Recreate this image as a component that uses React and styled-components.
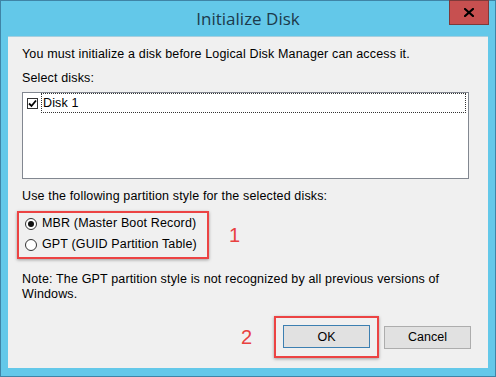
import styled, { createGlobalStyle } from "styled-components";

const GlobalStyle = createGlobalStyle`
    html, body {
        margin: 0;
        padding: 0;
        background: #ffffff;
    }
    body {
        font-family: "Liberation Sans", Arial, sans-serif;
        font-size: 12.5px;
        letter-spacing: 0.15px;
        color: #000000;
    }
`;

const App = () => {
    return (
        <>
            <GlobalStyle />
            <Window>
                <TitleBar>
                    <span />
                    <Title>Initialize Disk</Title>
                    <CloseButton>
                        <svg width="10" height="9" viewBox="0 0 10 9">
                            <path d="M1 1 L9 8 M9 1 L1 8" stroke="#000" strokeWidth="2.2" strokeLinecap="square" />
                        </svg>
                    </CloseButton>
                </TitleBar>
                <Client>
                    <Text>You must initialize a disk before Logical Disk Manager can access it.</Text>
                    <Label>Select disks:</Label>
                    <ListBox>
                        <ListItem>
                            <CheckBox>
                                <svg width="9" height="9" viewBox="0 0 9 9">
                                    <path d="M1 4.5 L3.5 7 L8 1.5" stroke="#000" strokeWidth="1.8" fill="none" />
                                </svg>
                            </CheckBox>
                            <ItemLabel>Disk 1</ItemLabel>
                        </ListItem>
                    </ListBox>
                    <Label $top={10}>Use the following partition style for the selected disks:</Label>
                    <MarkRow $top={7}>
                        <RedMark $pad="0 10px 2px 6px">
                            <RadioRow>
                                <Radio $checked />
                                <span>MBR (Master Boot Record)</span>
                            </RadioRow>
                            <RadioRow>
                                <Radio />
                                <span>GPT (GUID Partition Table)</span>
                            </RadioRow>
                        </RedMark>
                        <Step>1</Step>
                    </MarkRow>
                    <Note>
                        Note: The GPT partition style is not recognized by all previous versions of
                        <br />
                        Windows.
                    </Note>
                    <Buttons>
                        <Step>2</Step>
                        <RedMark $pad="7px 7px 8px 7px">
                            <Button $default>OK</Button>
                        </RedMark>
                        <Button>Cancel</Button>
                    </Buttons>
                </Client>
            </Window>
        </>
    );
};

const Window = styled.div`
    box-sizing: border-box;
    display: flex;
    flex-direction: column;
    width: 496px;
    height: 377px;
    padding: 0 7px 8px 7px;

    border: 1px solid #3f84a6;
    background-color: #63c8e9;
`;

const TitleBar = styled.div`
    display: grid;
    grid-template-columns: 1fr auto 1fr;
    height: 35px;
`;

const Title = styled.span`
    align-self: center;
    margin-top: -1px;

    font-family: "Open Sans", "Noto Sans", sans-serif;
    font-size: 17px;
    letter-spacing: 0;
    color: #1c3a4c;
`;

const CloseButton = styled.div`
    justify-self: end;
    display: flex;
    align-items: center;
    justify-content: center;
    width: 38px;
    height: 23px;
    margin-top: -1px;
    margin-right: -1px;

    border: 1px solid #7d3a3a;
    background-color: #c75050;
`;

const Client = styled.div`
    flex: 1;
    display: flex;
    flex-direction: column;
    padding: 10px 17px 0 14px;

    border-top: 1px solid #a6cfdf;
    background-color: #f0f0f0;
    line-height: 15px;
`;

const Text = styled.div`
    white-space: nowrap;
`;

const Label = styled.div`
    margin-top: ${({ $top }) => ($top ?? 9)}px;
    white-space: nowrap;
`;

const ListBox = styled.div`
    box-sizing: border-box;
    width: 447px;
    height: 87px;
    margin-top: 6px;
    padding: 0 2px 0 0;

    border: 1px solid #828790;
    background-color: #ffffff;
`;

const ListItem = styled.div`
    display: flex;
    align-items: center;
    height: 20px;
    padding-left: 4px;
`;

const CheckBox = styled.span`
    box-sizing: border-box;
    display: flex;
    align-items: center;
    justify-content: center;
    width: 11px;
    height: 11px;

    border: 1px solid #333333;
    background-color: #ffffff;
`;

const ItemLabel = styled.span`
    box-sizing: border-box;
    flex: 1;
    height: 20px;
    margin-left: 3px;
    padding: 2px 2px 0 1px;

    border: 1px dotted #333333;
    line-height: 15px;
`;

const MarkRow = styled.div`
    display: flex;
    align-items: center;
    gap: 20px;
    margin-top: ${({ $top }) => $top}px;
    margin-left: -5px;
`;

const RedMark = styled.div`
    display: flex;
    flex-direction: column;
    padding: ${({ $pad }) => $pad};

    border: 2px solid #ec4343;
    box-shadow: 0 1px 3px rgba(0, 0, 0, 0.35);
`;

const RadioRow = styled.label`
    display: flex;
    align-items: center;
    gap: 5px;
    height: 21px;
    white-space: nowrap;
`;

const Radio = styled.span`
    box-sizing: border-box;
    display: flex;
    align-items: center;
    justify-content: center;
    width: 12px;
    height: 12px;

    border: 1px solid #333333;
    border-radius: 50%;
    background-color: #ffffff;

    &::after {
        content: "";
        display: ${({ $checked }) => ($checked ? "block" : "none")};
        width: 6px;
        height: 6px;
        border-radius: 50%;
        background-color: #111111;
    }
`;

const Step = styled.span`
    font-size: 20px;
    line-height: 20px;
    letter-spacing: 0;
    color: #e8413f;
`;

const Note = styled.div`
    margin-top: 13px;
    white-space: nowrap;
`;

const Buttons = styled.div`
    display: flex;
    align-items: center;
    justify-content: flex-end;
    gap: 5px;
    margin-top: 14px;

    & > ${Step} {
        margin-right: 17px;
    }
`;

const Button = styled.button`
    box-sizing: border-box;
    width: 87px;
    height: 23px;
    padding: 0;

    font-family: "Liberation Sans", Arial, sans-serif;
    font-size: 12.5px;
    color: #000000;

    border: 1px solid ${({ $default }) => ($default ? "#3c7fb1" : "#adadad")};
    background-color: #e1e1e1;
`;

export default App;
